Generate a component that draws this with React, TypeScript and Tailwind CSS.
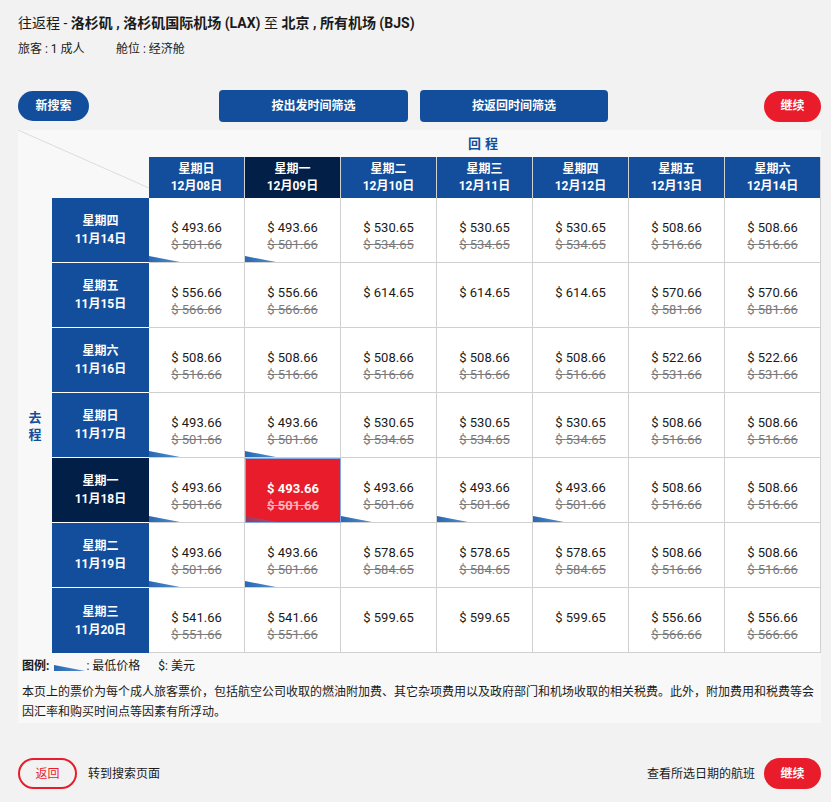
import React from 'react'

type Fare = { price: string; old?: string; low?: boolean }

const days = [
  ['星期日', '12月08日'],
  ['星期一', '12月09日'],
  ['星期二', '12月10日'],
  ['星期三', '12月11日'],
  ['星期四', '12月12日'],
  ['星期五', '12月13日'],
  ['星期六', '12月14日'],
]

const f = (price: string, old?: string, low = false): Fare => ({ price, old, low })

const rows: { day: string; date: string; fares: Fare[] }[] = [
  {
    day: '星期四',
    date: '11月14日',
    fares: [
      f('493.66', '501.66', true),
      f('493.66', '501.66', true),
      f('530.65', '534.65'),
      f('530.65', '534.65'),
      f('530.65', '534.65'),
      f('508.66', '516.66'),
      f('508.66', '516.66'),
    ],
  },
  {
    day: '星期五',
    date: '11月15日',
    fares: [
      f('556.66', '566.66'),
      f('556.66', '566.66'),
      f('614.65'),
      f('614.65'),
      f('614.65'),
      f('570.66', '581.66'),
      f('570.66', '581.66'),
    ],
  },
  {
    day: '星期六',
    date: '11月16日',
    fares: [
      f('508.66', '516.66'),
      f('508.66', '516.66'),
      f('508.66', '516.66'),
      f('508.66', '516.66'),
      f('508.66', '516.66'),
      f('522.66', '531.66'),
      f('522.66', '531.66'),
    ],
  },
  {
    day: '星期日',
    date: '11月17日',
    fares: [
      f('493.66', '501.66', true),
      f('493.66', '501.66', true),
      f('530.65', '534.65'),
      f('530.65', '534.65'),
      f('530.65', '534.65'),
      f('508.66', '516.66'),
      f('508.66', '516.66'),
    ],
  },
  {
    day: '星期一',
    date: '11月18日',
    fares: [
      f('493.66', '501.66', true),
      f('493.66', '501.66', true),
      f('493.66', '501.66', true),
      f('493.66', '501.66', true),
      f('493.66', '501.66', true),
      f('508.66', '516.66'),
      f('508.66', '516.66'),
    ],
  },
  {
    day: '星期二',
    date: '11月19日',
    fares: [
      f('493.66', '501.66', true),
      f('493.66', '501.66', true),
      f('578.65', '584.65'),
      f('578.65', '584.65'),
      f('578.65', '584.65'),
      f('508.66', '516.66'),
      f('508.66', '516.66'),
    ],
  },
  {
    day: '星期三',
    date: '11月20日',
    fares: [
      f('541.66', '551.66'),
      f('541.66', '551.66'),
      f('599.65'),
      f('599.65'),
      f('599.65'),
      f('556.66', '566.66'),
      f('556.66', '566.66'),
    ],
  },
]

const SEL_ROW = 4
const SEL_COL = 1

function LowMark({ className = '' }: { className?: string }) {
  return (
    <svg width="31" height="6" viewBox="0 0 31 6" className={className}>
      <defs>
        <linearGradient id="lowg" x1="0" x2="1" y1="0" y2="0">
          <stop offset="0" stopColor="#2a69b2" />
          <stop offset="1" stopColor="#4f8fd0" />
        </linearGradient>
      </defs>
      <polygon points="0,0 31,6 0,6" fill="url(#lowg)" />
    </svg>
  )
}

export default function App() {
  return (
    <div
      className="min-h-screen bg-[#f2f2f2] text-[#1a1a1a] pl-[18px] pr-[10px] pt-[13px] pb-[16px]"
      style={{ fontFamily: 'Roboto, "Noto Sans CJK SC", sans-serif' }}
    >
      {/* Title */}
      <h1 className="text-[14px] leading-[20px]">
        往返程 - <b>洛杉矶 , 洛杉矶国际机场 (LAX)</b> 至 <b>北京 , 所有机场 (BJS)</b>
      </h1>
      <div className="flex text-[12px] leading-[16px] mt-[8px]">
        <span className="w-[98px]">旅客 : 1 成人</span>
        <span>舱位 : 经济舱</span>
      </div>

      {/* Action buttons */}
      <div className="flex items-center mt-[33px] h-[32px]">
        <button className="h-[30px] w-[71px] rounded-full bg-[#134e9c] text-white text-[12px] font-bold">
          新搜索
        </button>
        <div className="ml-[130px] flex gap-[12px]">
          <button className="h-[32px] w-[189px] rounded-[4px] bg-[#134e9c] text-white text-[12px] font-bold">
            按出发时间筛选
          </button>
          <button className="h-[32px] w-[188px] rounded-[4px] bg-[#134e9c] text-white text-[12px] font-bold">
            按返回时间筛选
          </button>
        </div>
        <button className="ml-auto h-[31px] w-[57px] rounded-full bg-[#e81c2a] text-white text-[12px] font-bold">
          继续
        </button>
      </div>

      {/* Fare grid */}
      <div className="mt-[8px] w-[803px] bg-[#f8f8f8] grid grid-cols-[34px_97px_repeat(7,96px)] grid-rows-[27px_41px_repeat(7,65px)]">
        <div className="col-start-1 col-span-2 row-start-1 row-span-2 relative overflow-hidden">
          <svg width="131" height="68" className="absolute left-0 top-0">
            <line x1="0" y1="0" x2="131" y2="58" stroke="#dcdcdc" strokeWidth="1" />
          </svg>
        </div>
        <div className="col-start-3 col-span-7 row-start-1 flex items-center justify-center text-[13px] font-bold text-[#134e9c] tracking-[4px]">
          回程
        </div>
        {days.map(([d, dt], i) => (
          <div
            key={dt}
            className={`row-start-2 flex flex-col items-center justify-center text-white text-[12px] font-bold leading-[17px] border-r border-[#d0d0d0] ${
              i === SEL_COL ? 'bg-[#021f48]' : 'bg-[#134e9c]'
            }`}
          >
            <span>{d}</span>
            <span>{dt}</span>
          </div>
        ))}

        <div className="col-start-1 row-start-3 row-span-7 flex flex-col items-center justify-center text-[13px] font-bold text-[#134e9c] leading-[17px]">
          <span>去</span>
          <span>程</span>
        </div>

        {rows.map((r, ri) => (
          <React.Fragment key={r.date}>
            <div
              className={`col-start-2 flex flex-col items-center justify-center text-white text-[12px] font-bold leading-[18px] ${
                ri === SEL_ROW ? 'bg-[#021f48]' : 'bg-[#134e9c]'
              } ${ri < rows.length - 1 ? 'border-b border-white' : ''}`}
            >
              <span>{r.day}</span>
              <span>{r.date}</span>
            </div>
            {r.fares.map((fare, ci) => {
              const sel = ri === SEL_ROW && ci === SEL_COL
              return (
                <div
                  key={ci}
                  className={`relative flex flex-col items-center pt-[21px] text-[13px] leading-[17px] ${
                    sel
                      ? 'bg-[#e81c2a] text-white font-bold border border-[#86a6e0]'
                      : 'bg-white border-r border-b border-[#d0d0d0]'
                  }`}
                >
                  <span>$ {fare.price}</span>
                  {fare.old && (
                    <span className={`line-through ${sel ? 'text-[#f6b3b8]' : 'text-[#7a7a7a]'}`}>$ {fare.old}</span>
                  )}
                  {fare.low && <LowMark className={`absolute left-0 bottom-0 ${sel ? 'opacity-40' : ''}`} />}
                </div>
              )
            })}
          </React.Fragment>
        ))}
      </div>

      {/* Legend and notes */}
      <div className="w-[803px] bg-[#f8f8f8] px-[4px] pt-[5px] pb-[1px] text-[12px]">
        <div className="flex items-center leading-[16px]">
          <b>图例:</b>
          <LowMark className="ml-[5px] mr-[1px] mt-[4px]" />
          <span>: 最低价格</span>
          <span className="ml-[18px]">$: 美元</span>
        </div>
        <p className="mt-[8px] leading-[20px]">
          本页上的票价为每个成人旅客票价，包括航空公司收取的燃油附加费、其它杂项费用以及政府部门和机场收取的相关税费。此外，附加费用和税费等会因汇率和购买时间点等因素有所浮动。
        </p>
      </div>

      {/* Footer */}
      <div className="flex items-center mt-[35px] text-[12px]">
        <button className="h-[31px] w-[59px] rounded-full border-2 border-[#e81c2a] text-[#e81c2a] text-[12px]">
          返回
        </button>
        <span className="ml-[11px]">转到搜索页面</span>
        <span className="ml-auto mr-[9px]">查看所选日期的航班</span>
        <button className="h-[31px] w-[57px] rounded-full bg-[#e81c2a] text-white text-[12px] font-bold">
          继续
        </button>
      </div>
    </div>
  )
}
